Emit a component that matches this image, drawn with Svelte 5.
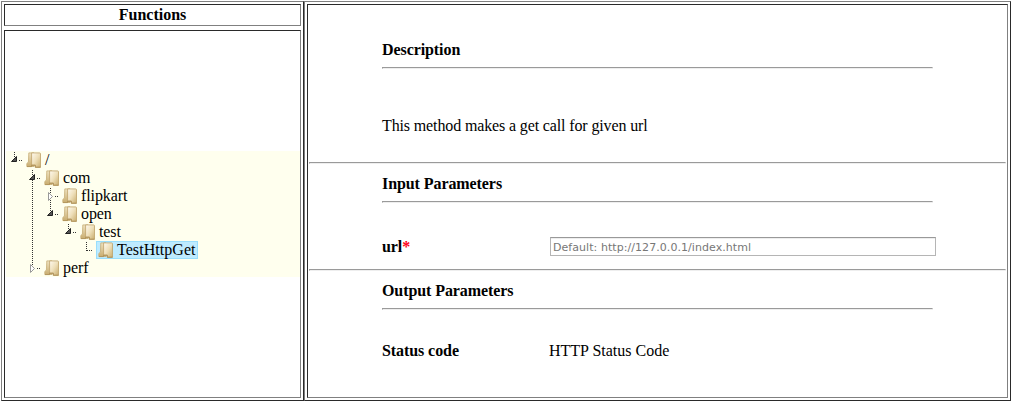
<script>
  const rows = [
    { name: '/', depth: 0, state: 'open', guides: [] },
    { name: 'com', depth: 1, state: 'open', more: true, guides: [] },
    { name: 'flipkart', depth: 2, state: 'closed', more: true, guides: [1] },
    { name: 'open', depth: 2, state: 'open', guides: [1] },
    { name: 'test', depth: 3, state: 'open', guides: [1] },
    { name: 'TestHttpGet', depth: 4, state: 'leaf', selected: true, guides: [1] },
    { name: 'perf', depth: 1, state: 'closed', guides: [] }
  ];
</script>

<div class="page">
  <section class="frame left">
    <h2 class="cell heading">Functions</h2>
    <div class="cell browser">
      <div class="tree">
        {#each rows as row}
          <div class="row">
            {#each Array(row.depth) as _, level}
              <svg class="slot" viewBox="0 0 18 18">
                {#if row.guides.includes(level)}
                  <path class="dots" d="M8.5 1V18" />
                {/if}
              </svg>
            {/each}
            <svg class="slot" viewBox="0 0 18 18">
              {#if row.state === 'leaf'}
                <path class="dots" d="M8.5 1V10M9 9.5H14" />
              {:else}
                <path class="dots" d="M8.5 1V6M13 9.5H17" />
                {#if row.more}<path class="dots" d="M8.5 11V18" />{/if}
                {#if row.state === 'open'}
                  <path d="M10.5 5.5V10.5H5.5Z" fill="#555" stroke="#222" />
                {:else}
                  <path d="M6.5 5.5L10.5 9.5L6.5 13.5Z" fill="#fff" stroke="#999" />
                {/if}
              {/if}
            </svg>
            <span class="node" class:selected={row.selected}>
              <svg class="folder" viewBox="0 0 16 16">
                <defs>
                  <linearGradient id="front" x2="1" y2="1">
                    <stop offset="0" stop-color="#fffaf0" />
                    <stop offset=".5" stop-color="#eedfb9" />
                    <stop offset="1" stop-color="#c9ad6e" />
                  </linearGradient>
                  <linearGradient id="back" x2="0" y2="1">
                    <stop offset="0" stop-color="#efe2c0" />
                    <stop offset="1" stop-color="#c9ad70" />
                  </linearGradient>
                </defs>
                <path d="M2.8 .9H8V14.5H.8V11.5L2.4 10Z" fill="url(#back)" stroke="#c8ae78" stroke-width=".8" />
                <path d="M5.6 .9H13.6Q14.5 .9 14.5 1.8V15.2H9.3V13.2H5.6Z" fill="url(#front)" stroke="#bfa268" stroke-width=".8" />
                <path d="M1 14.6H5.6V13.2H9.3V15.3H14.6" fill="none" stroke="#aa8c50" stroke-width=".8" />
              </svg>
              <span>{row.name}</span>
            </span>
          </div>
        {/each}
      </div>
    </div>
  </section>

  <section class="frame right">
    <div class="cell details">
      <div class="block description">
        <h3>Description</h3>
        <hr />
        <p>This method makes a get call for given url</p>
      </div>
      <hr />
      <div class="block input">
        <h3>Input Parameters</h3>
        <hr />
        <div class="field">
          <label for="url">url<span class="required">*</span></label>
          <input id="url" placeholder="Default: http://127.0.0.1/index.html" />
        </div>
      </div>
      <hr />
      <div class="block output">
        <h3>Output Parameters</h3>
        <hr />
        <div class="field">
          <b>Status code</b>
          <span>HTTP Status Code</span>
        </div>
      </div>
    </div>
  </section>
</div>

<style>
  :global(body) { background: #fff; }
  .page {
    box-sizing: border-box;
    width: 1011px;
    height: 401px;
    padding: 1px 0 0 1px;
    display: flex;
    font: 16px/18px "Liberation Serif", "Times New Roman", serif;
    color: #000;
  }
  .frame {
    box-sizing: border-box;
    display: flex;
    flex-direction: column;
    gap: 4px;
    padding: 2px;
    border: 1px solid;
    border-color: #808080 #2a2a2a #2a2a2a #808080;
  }
  .left { width: 303px; }
  .right { width: 707px; }
  .cell {
    box-sizing: border-box;
    border: 1px solid;
    border-color: #2a2a2a #808080 #808080 #2a2a2a;
  }
  .heading {
    height: 22px;
    margin: 0;
    padding-top: 1px;
    font-size: 16px;
    text-align: center;
  }
  .browser {
    flex: 1;
    display: flex;
    flex-direction: column;
    justify-content: center;
    padding: 0 0 1px 1px;
  }
  .tree { background: #ffffee; letter-spacing: -0.1px; }
  .row { display: flex; height: 18px; }
  .slot { width: 18px; height: 18px; flex: none; }
  .dots { fill: none; stroke: #333; stroke-dasharray: 1 1; }
  .node {
    box-sizing: border-box;
    display: flex;
    height: 18px;
    padding: 0 1px;
    border: 1px solid transparent;
    line-height: 16px;
    white-space: nowrap;
  }
  .selected {
    background: #beebff;
    border-color: #99defd;
    letter-spacing: 0.05px;
  }
  .folder { width: 16px; height: 16px; margin-right: 3px; }
  .details { flex: 1; padding: 0 1px; }
  h3 {
    margin: 0;
    font-size: 16px;
    line-height: 18px;
    letter-spacing: -0.08px;
  }
  hr {
    margin: 0;
    height: 2px;
    box-sizing: border-box;
    border: 1px solid;
    border-color: #9a9a9a #eee #eee #9a9a9a;
  }
  .block { box-sizing: border-box; width: 624px; padding-left: 73px; }
  .description { height: 157px; padding-top: 36px; }
  .description hr { margin-top: 8px; }
  p { margin: 48px 0 0; letter-spacing: -0.13px; }
  .input { height: 105px; padding-top: 11px; }
  .input hr, .output hr { margin-top: 8px; }
  .output { padding-top: 11px; }
  .field { display: flex; align-items: center; }
  .field > :first-child {
    flex: none;
    width: 167px;
    font-weight: bold;
    letter-spacing: -0.08px;
  }
  .input .field { margin-top: 34px; }
  .output .field { margin-top: 32px; }
  .required { color: #ff0020; }
  input {
    box-sizing: border-box;
    flex: none;
    width: 386px;
    height: 19px;
    margin: 0 0 0 1px;
    padding: 2px 2px 0;
    border: 1px solid;
    border-color: #999 #b5b5b5 #b5b5b5;
    box-shadow: inset 0 1px #eee;
    background: #fff;
    font: 11px/15px "Lucida Grande", "DejaVu Sans", sans-serif;
    letter-spacing: 0.06px;
  }
  input::placeholder { color: #777; opacity: 1; }
</style>
